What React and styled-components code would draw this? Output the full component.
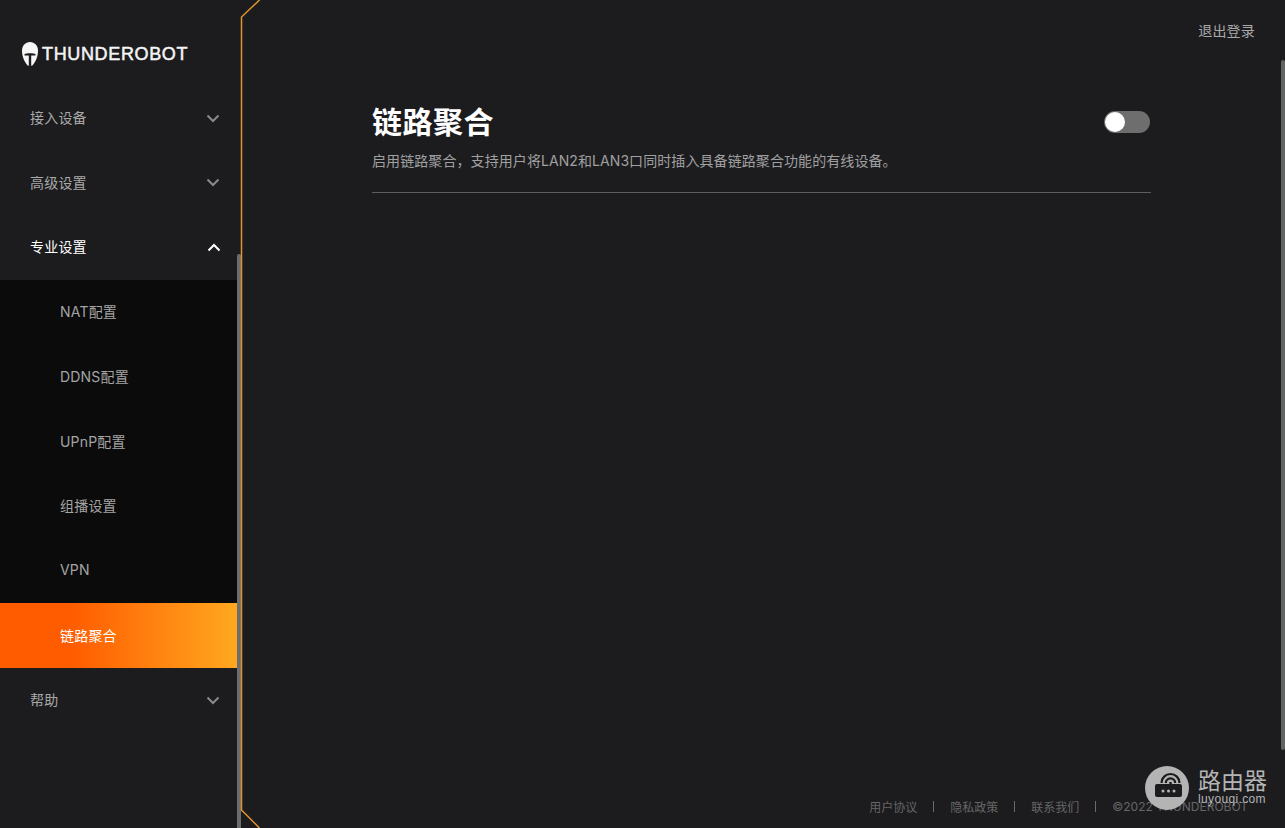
import React from 'react';
import styled, { createGlobalStyle } from 'styled-components';

const GlobalStyle = createGlobalStyle`
  html, body {
    margin: 0;
    padding: 0;
    height: 100%;
    background: #1c1c1f;
    overflow: hidden;
  }
  body {
    font-family: Inter, "Noto Sans CJK SC", sans-serif;
  }
  * { box-sizing: border-box; }
`;

const Page = styled.div`
  position: relative;
  display: flex;
  width: 1285px;
  height: 828px;
  overflow: hidden;
  background: #1c1c1f;
`;

const Sidebar = styled.aside`
  flex: 0 0 241px;
  height: 100%;
  padding-right: 4px;
  position: relative;
`;

const LogoBar = styled.div`
  display: flex;
  align-items: center;
  gap: 4px;
  height: 86px;
  padding: 21px 0 0 22px;
`;

const LogoText = styled.span`
  font-family: "Liberation Sans", sans-serif;
  font-weight: 400;
  font-size: 18px;
  line-height: 1;
  letter-spacing: 0.65px;
  color: #f4f4f4;
  -webkit-text-stroke: 0.5px #f4f4f4;
`;

const NavRow = styled.div`
  display: flex;
  align-items: center;
  justify-content: space-between;
  height: 64.6px;
  padding: 0 17px 0 30px;
  font-size: 14px;
  letter-spacing: 0.2px;
  color: ${({ $open }) => ($open ? '#ffffff' : '#a9a9a9')};
`;

const RowLabel = styled.span`
  margin-bottom: 2px;
`;

const SubMenu = styled.div`
  background: #0b0b0b;
`;

const SubRow = styled.div`
  display: flex;
  align-items: center;
  height: 64.7px;
  padding: 0 0 2px 60px;
  font-size: 14px;
  letter-spacing: 0.2px;
  color: ${({ $active }) => ($active ? '#ffffff' : '#a4a4a4')};
  background: ${({ $active }) =>
    $active ? 'linear-gradient(90deg, #ff5c00 30%, #ffa81f 100%)' : 'transparent'};
`;

const SideThumb = styled.div`
  position: absolute;
  top: 254px;
  bottom: 0;
  right: 0;
  width: 4px;
  border-radius: 2px 2px 0 0;
  background: #6d6d6d;
`;

const Frame = styled.svg`
  position: absolute;
  left: 238px;
  top: 0;
  width: 24px;
  height: 828px;
  pointer-events: none;
`;

const Main = styled.main`
  flex: 1;
  display: flex;
  flex-direction: column;
  height: 100%;
  min-width: 0;
`;

const TopBar = styled.div`
  display: flex;
  justify-content: flex-end;
  height: 100px;
  padding: 20px 30px 0 0;
`;

const Logout = styled.span`
  font-size: 14px;
  line-height: 22px;
  letter-spacing: 0.2px;
  color: #a9a9a9;
`;

const Content = styled.section`
  flex: 1;
  width: 779px;
  margin-left: 131px;
`;

const Header = styled.div`
  display: flex;
  align-items: flex-start;
  justify-content: space-between;
  padding-bottom: 20px;
  border-bottom: 1px solid #5e5e5e;
`;

const Title = styled.h1`
  margin: 0;
  font-size: 30px;
  line-height: 44px;
  font-weight: 700;
  letter-spacing: 0.5px;
  color: #ffffff;
`;

const Description = styled.p`
  margin: 6px 0 0;
  font-size: 14px;
  line-height: 22px;
  letter-spacing: 0.08px;
  color: #a0a0a0;
`;

const Switch = styled.div`
  position: relative;
  flex: none;
  width: 46px;
  height: 22px;
  margin: 11px 1px 0 0;
  border-radius: 11px;
  background: #6e6e6e;

  &::after {
    content: '';
    position: absolute;
    left: 1px;
    top: 1px;
    width: 20px;
    height: 20px;
    border-radius: 50%;
    background: #ffffff;
  }
`;

const Footer = styled.footer`
  display: flex;
  align-items: center;
  justify-content: flex-end;
  gap: 16px;
  height: 44px;
  padding: 0 37px 0 0;
  font-size: 12px;
  color: #666666;
`;

const FooterSep = styled.span`
  width: 1px;
  height: 11px;
  background: #6a6a6a;
`;

const MainThumb = styled.div`
  position: absolute;
  top: 60px;
  right: 0;
  width: 4px;
  height: 690px;
  border-radius: 2px;
  background: #616462;
`;

const Watermark = styled.div`
  position: absolute;
  left: 1145px;
  top: 766px;
  display: flex;
  gap: 9px;
`;

const MarkCircle = styled.svg`
  display: block;
  width: 44px;
  height: 44px;
`;

const MarkText = styled.div`
  display: flex;
  flex-direction: column;
  color: #b4b4b4;
`;

const MarkTitle = styled.span`
  font-family: "Noto Sans CJK SC", sans-serif;
  font-size: 23px;
  line-height: 27px;
`;

const MarkUrl = styled.span`
  font-family: "Liberation Sans", sans-serif;
  font-size: 12px;
  line-height: 12px;
  letter-spacing: 0.35px;
`;

const Chevron = ({ up, color }) => (
  <svg width="14" height="9" viewBox="0 0 14 9" fill="none">
    <path
      d={up ? 'M1.5 7.5 7 2l5.500 5.500' : 'M1.500 1.500 7 7l5.500-5.500'}
      stroke={color}
      strokeWidth="2"
    />
  </svg>
);

const UpChevronSlot = styled.span`
  display: flex;
  margin-right: -1px;
`;

const Helmet = () => (
  <svg width="16" height="24" viewBox="0 0 16 24">
    <path
      d="M8 0C3.400 0 0 3.600 0 8.500 0 14 1.800 19.500 6 23.800h4C14.200 19.500 16 14 16 8.500 16 3.600 12.600 0 8 0Z"
      fill="#f6f6f6"
    />
    <path d="M2.500 12.200C4 10.800 12 10.800 13.500 12.200v1.300H9.200V24H6.800V13.500H2.500Z" fill="#1c1c1f" />
  </svg>
);

const RouterMark = () => (
  <MarkCircle viewBox="0 0 44 44" fill="none">
    <circle cx="22" cy="22" r="22" fill="#b4b4b4" />
    <path d="M16.500 17a9 9 0 0 1 18 0" stroke="#1c1c1f" strokeWidth="2.200" />
    <path d="M20.800 17a4.700 4.700 0 0 1 9.400 0" stroke="#1c1c1f" strokeWidth="2.200" />
    <path d="M24.300 18v-2h2.400v2Z" fill="#1c1c1f" />
    <rect x="10" y="18" width="27" height="13" rx="2" fill="#1c1c1f" />
    <circle cx="18" cy="25" r="1.500" fill="#b4b4b4" />
    <circle cx="23.500" cy="25" r="1.500" fill="#b4b4b4" />
    <circle cx="29" cy="25" r="1.500" fill="#b4b4b4" />
  </MarkCircle>
);

const subItems = ['NAT配置', 'DDNS配置', 'UPnP配置', '组播设置', 'VPN', '链路聚合'];

export default function App() {
  return (
    <Page>
      <GlobalStyle />
      <Sidebar>
        <LogoBar>
          <Helmet />
          <LogoText>THUNDEROBOT</LogoText>
        </LogoBar>
        <NavRow><RowLabel>接入设备</RowLabel><Chevron color="#8a8a8a" /></NavRow>
        <NavRow><RowLabel>高级设置</RowLabel><Chevron color="#8a8a8a" /></NavRow>
        <NavRow $open>
          <RowLabel>专业设置</RowLabel>
          <UpChevronSlot><Chevron up color="#ffffff" /></UpChevronSlot>
        </NavRow>
        <SubMenu>
          {subItems.map((item) => (
            <SubRow key={item} $active={item === '链路聚合'}>{item}</SubRow>
          ))}
        </SubMenu>
        <NavRow><RowLabel>帮助</RowLabel><Chevron color="#8a8a8a" /></NavRow>
        <SideThumb />
      </Sidebar>
      <Main>
        <TopBar>
          <Logout>退出登录</Logout>
        </TopBar>
        <Content>
          <Header>
            <div>
              <Title>链路聚合</Title>
              <Description>启用链路聚合，支持用户将LAN2和LAN3口同时插入具备链路聚合功能的有线设备。</Description>
            </div>
            <Switch />
          </Header>
        </Content>
        <Footer>
          <span>用户协议</span>
          <FooterSep />
          <span>隐私政策</span>
          <FooterSep />
          <span>联系我们</span>
          <FooterSep />
          <span>©2022 THUNDEROBOT</span>
        </Footer>
      </Main>
      <Frame viewBox="0 0 24 828">
        <path d="M21.500 0 3.500 17v793l18 18" fill="none" stroke="#e0952c" strokeWidth="1.500" />
      </Frame>
      <MainThumb />
      <Watermark>
        <RouterMark />
        <MarkText>
          <MarkTitle>路由器</MarkTitle>
          <MarkUrl>luyouqi.com</MarkUrl>
        </MarkText>
      </Watermark>
    </Page>
  );
}
